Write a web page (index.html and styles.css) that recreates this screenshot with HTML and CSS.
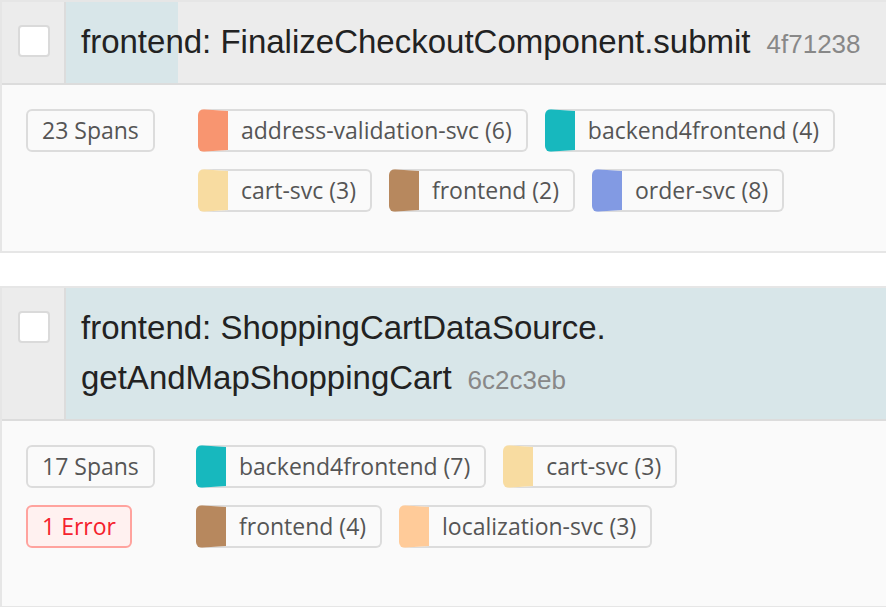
FILE: index.html
```html
<!DOCTYPE html>
<html lang="en">
<head>
<meta charset="utf-8">
<title>Trace results</title>
<link rel="stylesheet" href="styles.css">
</head>
<body>
<div class="results">
  <section class="trace">
    <header class="trace-head">
      <div class="select-col"><span class="checkbox"></span></div>
      <div class="title-area" style="--dur: 12.8%">
        <span class="title">frontend: FinalizeCheckoutComponent.submit</span><span class="trace-id">4f71238</span>
      </div>
    </header>
    <div class="trace-body">
      <div class="summary">
        <span class="tag">23 Spans</span>
      </div>
      <div class="services">
        <span class="svc" style="--c:#f89570">address-validation-svc (6)</span>
        <span class="svc" style="--c:#17b8be">backend4frontend (4)</span>
        <span class="svc" style="--c:#f8dca1">cart-svc (3)</span>
        <span class="svc" style="--c:#b7885e">frontend (2)</span>
        <span class="svc" style="--c:#829ae3">order-svc (8)</span>
      </div>
    </div>
  </section>

  <section class="trace">
    <header class="trace-head">
      <div class="select-col"><span class="checkbox"></span></div>
      <div class="title-area" style="--dur: 100%">
        <span class="title">frontend: ShoppingCartDataSource.<wbr>getAndMapShoppingCart</span><span class="trace-id">6c2c3eb</span>
      </div>
    </header>
    <div class="trace-body trace-body--tall">
      <div class="summary">
        <span class="tag">17 Spans</span>
        <span class="tag tag--error">1 Error</span>
      </div>
      <div class="services">
        <span class="svc" style="--c:#17b8be">backend4frontend (7)</span>
        <span class="svc" style="--c:#f8dca1">cart-svc (3)</span>
        <span class="svc" style="--c:#b7885e">frontend (4)</span>
        <span class="svc" style="--c:#ffcb99">localization-svc (3)</span>
      </div>
    </div>
  </section>
</div>
</body>
</html>
```

FILE: styles.css
```css
html, body {
  margin: 0;
  padding: 0;
  background: #ffffff;
  overflow: hidden;
}

.results {
  width: 940px;
  display: flex;
  flex-direction: column;
  gap: 33px;
}

.trace {
  border: 2px solid #e6e6e6;
  background: #fafafa;
}

.trace-head {
  display: flex;
  background: #ececec;
  border-bottom: 2px solid #dcdcdc;
}

.select-col {
  width: 64px;
  flex: none;
  box-sizing: border-box;
  padding: 23px 0 0 16px;
  border-right: 2px solid #dcdcdc;
}

.checkbox {
  display: block;
  box-sizing: border-box;
  width: 32px;
  height: 32px;
  background: #ffffff;
  border: 2px solid #dadada;
  border-radius: 4px;
}

.title-area {
  flex: 1;
  padding: 15px 15px 16px;
  font-family: "Liberation Sans", Arial, sans-serif;
  font-size: 33px;
  line-height: 50px;
  color: #222222;
  background: linear-gradient(to right, #d8e6e9 var(--dur), transparent var(--dur));
}

.trace-id {
  font-size: 26px;
  line-height: 1;
  color: #888888;
  margin-left: 16px;
}

.trace-body {
  display: grid;
  grid-template-columns: 172px 650px;
  padding: 24px 24px 39px;
  font-family: "Open Sans", "Noto Sans", sans-serif;
  font-size: 23px;
  color: #555555;
}

.trace-body--tall {
  grid-template-columns: 170px 650px;
  padding-bottom: 58px;
}

.summary {
  display: flex;
  flex-direction: column;
  align-items: flex-start;
  gap: 17px;
}

.services {
  display: flex;
  flex-wrap: wrap;
  align-content: flex-start;
  gap: 17px;
}

.tag,
.svc {
  display: inline-block;
  box-sizing: border-box;
  height: 43px;
  line-height: 39px;
  border: 2px solid #dcdcdc;
  border-radius: 6px;
  background: #fafafa;
  white-space: nowrap;
}

.tag {
  padding: 0 14px;
}

.tag--error {
  background: #fff1f0;
  border-color: #ffa39e;
  color: #f5222d;
}

.svc {
  border-left: 30px solid var(--c);
  padding: 0 14px 0 13px;
}
```
